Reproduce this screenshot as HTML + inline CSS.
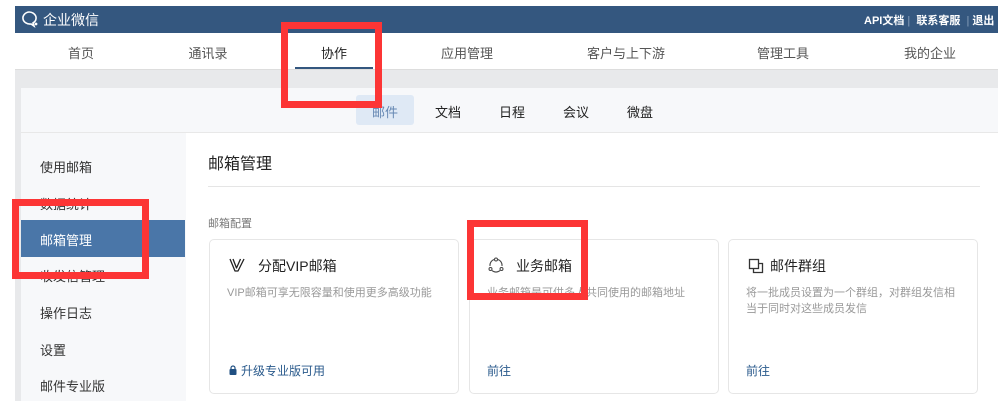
<!DOCTYPE html>
<html><head><meta charset="utf-8"><style>
*{margin:0;padding:0;box-sizing:border-box}
body{width:998px;height:401px;overflow:hidden;background:#fff;font-family:"Liberation Sans","Noto Sans CJK SC",sans-serif;position:relative}
.a{position:absolute;white-space:nowrap}
.hdr{left:15px;top:6px;width:983px;height:27px;background:#34577f}
.nav{left:15px;top:33px;width:983px;height:37px;background:#fff;border-bottom:1px solid #ddd}
.nav span{position:absolute;top:10px;font-size:13px;color:#555;transform:translateX(-50%)}
.gray{left:15px;top:70px;width:983px;height:331px;background:#e8e9eb}
.panel{left:21px;top:88px;width:977px;height:313px;background:#f7f8fa}
.sub{font-size:13px;color:#222;top:102px}
.side{left:40px;font-size:13px;color:#333}
.main{left:186px;top:133px;width:812px;height:268px;background:#fff}
.card{top:239px;width:250px;height:155px;border:1px solid #e6e6e6;border-radius:5px;background:#fff}
.ct{font-size:14px;color:#222;top:256px}
.cd{font-size:11px;color:#999;top:285px;line-height:16px}
.cf{font-size:12px;color:#2a5a8c;top:362px}
.red{border:7px solid #fc3535}
</style></head><body>
<div class="a hdr"></div>
<svg class="a" style="left:20px;top:10px" width="20" height="18" viewBox="0 0 20 18"><path d="M9 2a7 6 0 1 0 2 12l3 2-1-3a7 6 0 0 0-4-11z" fill="none" stroke="#fff" stroke-width="1.6"/><circle cx="16" cy="14" r="1.4" fill="#fff"/></svg>
<div class="a" style="left:43px;top:10px;font-size:14px;color:#fff">企业微信</div>
<div class="a" style="left:864px;top:12px;font-size:11px;color:#fff;font-weight:bold">API文档 <span style="color:#8aa0bb;font-weight:normal">|</span> &nbsp;联系客服 &nbsp;<span style="color:#8aa0bb;font-weight:normal">|</span> 退出</div>
<div class="a nav">
<span style="left:66px">首页</span><span style="left:193px">通讯录</span><span style="left:319px;color:#222">协作</span><span style="left:452px">应用管理</span><span style="left:611px">客户与上下游</span><span style="left:768px">管理工具</span><span style="left:915px">我的企业</span>
<div style="position:absolute;left:280px;top:34px;width:78px;height:2px;background:#34577f"></div>
</div>
<div class="a gray"></div>
<div class="a panel"></div>
<div class="a" style="left:356px;top:95px;width:58px;height:30px;background:#dfe9f5;border-radius:3px"></div>
<div class="a sub" style="left:372px;color:#6688b3">邮件</div>
<div class="a sub" style="left:435px">文档</div>
<div class="a sub" style="left:499px">日程</div>
<div class="a sub" style="left:563px">会议</div>
<div class="a sub" style="left:627px">微盘</div>
<div class="a" style="left:21px;top:132px;width:977px;height:1px;background:#e8e8e8"></div>
<div class="a side" style="top:157px">使用邮箱</div>
<div class="a side" style="top:194px">数据统计</div>
<div class="a" style="left:21px;top:220px;width:164px;height:37px;background:#4a76a8"></div>
<div class="a side" style="top:230px;color:#fff">邮箱管理</div>
<div class="a side" style="top:266px">收发信管理</div>
<div class="a side" style="top:303px">操作日志</div>
<div class="a side" style="top:340px">设置</div>
<div class="a side" style="top:376px">邮件专业版</div>
<div class="a main"></div>
<div class="a" style="left:208px;top:150px;font-size:16px;color:#222">邮箱管理</div>
<div class="a" style="left:208px;top:186px;width:772px;height:1px;background:#e5e5e5"></div>
<div class="a" style="left:208px;top:215px;font-size:11px;color:#777">邮箱配置</div>
<div class="a card" style="left:209px"></div>
<div class="a card" style="left:469px"></div>
<div class="a card" style="left:728px"></div>
<svg class="a" style="left:229px;top:258px" width="16" height="14" viewBox="0 0 16 14"><path d="M1 1L6 13H9L15 1M4 1L7.5 10L11.5 1" fill="none" stroke="#222" stroke-width="1.3" stroke-linejoin="round"/></svg>
<div class="a ct" style="left:258px">分配VIP邮箱</div>
<svg class="a" style="left:488px;top:257px" width="16" height="16" viewBox="0 0 16 16"><path d="M6 2.5A6 6 0 0 0 2 9M14 9a6 6 0 0 0-4-6.5M4 13.5a6 6 0 0 0 8 0" fill="none" stroke="#444" stroke-width="1.1"/><circle cx="8" cy="2.5" r="1.5" fill="#fff" stroke="#444"/><circle cx="2.5" cy="12" r="1.5" fill="#fff" stroke="#444"/><circle cx="13.5" cy="12" r="1.5" fill="#fff" stroke="#444"/></svg>
<div class="a ct" style="left:516px">业务邮箱</div>
<svg class="a" style="left:748px;top:258px" width="16" height="16" viewBox="0 0 16 16"><rect x="1.5" y="1.5" width="9" height="9" fill="none" stroke="#333" stroke-width="1.3"/><path d="M5.5 10.5V14.5H14.5V5.5H10.5" fill="none" stroke="#333" stroke-width="1.3"/></svg>
<div class="a ct" style="left:770px">邮件群组</div>
<div class="a cd" style="left:227px">VIP邮箱可享无限容量和使用更多高级功能</div>
<div class="a cd" style="left:487px">业务邮箱是可供多人共同使用的邮箱地址</div>
<div class="a cd" style="left:746px">将一批成员设置为一个群组，对群组发信相<br>当于同时对这些成员发信</div>
<svg class="a" style="left:229px;top:365px" width="8" height="10" viewBox="0 0 8 10"><path d="M2 4V3a2 2 0 0 1 4 0v1" fill="none" stroke="#1f4f82" stroke-width="1.2"/><rect x="0.5" y="4" width="7" height="6" rx="1" fill="#1f4f82"/></svg>
<div class="a cf" style="left:241px">升级专业版可用</div>
<div class="a cf" style="left:487px">前往</div>
<div class="a cf" style="left:746px">前往</div>
<div class="a red" style="left:281px;top:22px;width:101px;height:86px"></div>
<div class="a red" style="left:12px;top:199px;width:137px;height:80px"></div>
<div class="a red" style="left:467px;top:220px;width:121px;height:80px"></div>
</body></html>
